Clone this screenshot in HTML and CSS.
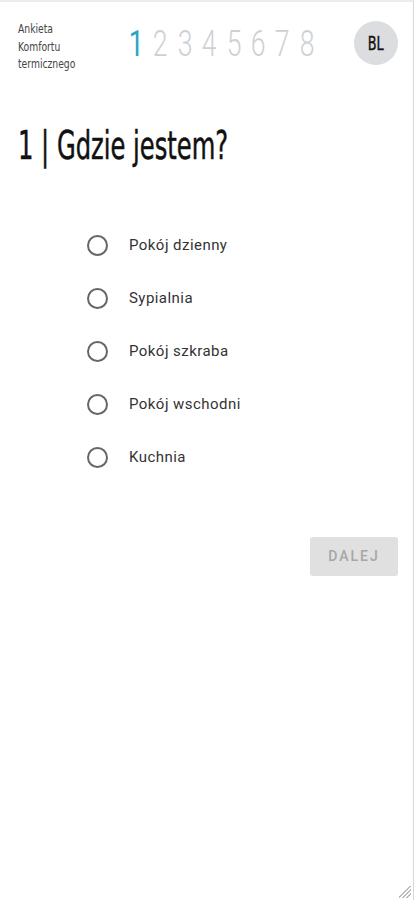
FILE: index.html
```html
<!DOCTYPE html>
<html lang="pl">
<head>
<meta charset="utf-8">
<title>Ankieta Komfortu termicznego</title>
<link rel="stylesheet" href="styles.css">
</head>
<body>
<div class="frame">
  <header class="top">
    <div class="brand"><span class="narrow">Ankieta<br>Komfortu<br>termicznego</span></div>
    <nav class="steps">
      <span class="step active">1</span>
      <span class="step">2</span>
      <span class="step">3</span>
      <span class="step">4</span>
      <span class="step">5</span>
      <span class="step">6</span>
      <span class="step">7</span>
      <span class="step">8</span>
    </nav>
    <div class="avatar"><span class="narrow">BL</span></div>
  </header>
  <h1 class="title"><span class="narrow">1 | Gdzie jestem?</span></h1>
  <form class="options">
    <label class="option"><input type="radio" name="room"><span class="dot"></span><span class="text">Pokój dzienny</span></label>
    <label class="option"><input type="radio" name="room"><span class="dot"></span><span class="text">Sypialnia</span></label>
    <label class="option"><input type="radio" name="room"><span class="dot"></span><span class="text">Pokój szkraba</span></label>
    <label class="option"><input type="radio" name="room"><span class="dot"></span><span class="text">Pokój wschodni</span></label>
    <label class="option"><input type="radio" name="room"><span class="dot"></span><span class="text">Kuchnia</span></label>
  </form>
  <div class="actions">
    <button class="next" type="button" disabled>DALEJ</button>
  </div>
  <div class="grip"></div>
</div>
</body>
</html>
```
FILE: styles.css
```css
html, body {
  margin: 0;
  padding: 0;
  background: #fff;
}
.frame {
  box-sizing: border-box;
  width: 414px;
  height: 900px;
  border-top: 2px solid #ececec;
  border-right: 1px solid #d9d9d9;
  position: relative;
}
.narrow {
  display: inline-block;
  font-family: "DejaVu Sans Condensed", "DejaVu Sans", sans-serif;
  transform-origin: left center;
}
.top {
  display: flex;
  align-items: center;
  padding: 18px 15px 0 18px;
}
.brand {
  width: 106px;
  font-size: 12.5px;
  line-height: 17.5px;
  color: #444;
}
.brand .narrow {
  transform: scaleX(0.82);
}
.steps {
  display: flex;
  margin-top: -6px;
}
.step {
  width: 24.4px;
  text-align: center;
  font-family: Roboto, "Liberation Sans", sans-serif;
  font-weight: 300;
  font-size: 37px;
  line-height: 40px;
  color: #cdd1d6;
  transform: scaleX(0.72);
}
.step.active {
  color: #2aa3c8;
  font-weight: 400;
}
.avatar {
  margin-left: auto;
  width: 44px;
  height: 44px;
  border-radius: 50%;
  background: #dcdde0;
  display: flex;
  align-items: center;
  justify-content: center;
  font-size: 19px;
  color: #111;
  margin-top: -8px;
}
.avatar .narrow {
  transform: scaleX(0.75);
  transform-origin: center;
  -webkit-text-stroke: 0.4px #111;
}
.title {
  margin: 50px 0 0 18px;
  font-weight: normal;
  font-size: 39px;
  line-height: 44px;
  color: #111;
}
.title .narrow {
  transform: scaleX(0.69);
  -webkit-text-stroke: 0.5px #111;
}
.options {
  display: flex;
  flex-direction: column;
  margin: 51px 0 0 87px;
}
.option {
  display: flex;
  align-items: center;
  height: 53px;
  font-family: Roboto, "Liberation Sans", sans-serif;
  font-size: 15px;
  letter-spacing: 0.45px;
  color: #333;
}
.option input {
  display: none;
}
.dot {
  box-sizing: border-box;
  width: 21px;
  height: 21px;
  border: 2px solid #666;
  border-radius: 50%;
  margin-right: 21px;
}
.actions {
  display: flex;
  justify-content: flex-end;
  padding-right: 15px;
  margin-top: 53px;
}
.next {
  width: 88px;
  height: 39px;
  border: none;
  border-radius: 3px;
  background: #e0e0e0;
  color: #a6a6a6;
  font-family: Roboto, "Liberation Sans", sans-serif;
  font-weight: 500;
  font-size: 14px;
  letter-spacing: 2px;
}
.grip {
  position: absolute;
  right: 2px;
  bottom: 2px;
  width: 12px;
  height: 12px;
  background: linear-gradient(135deg, transparent 0 45%, #bbb 45% 52%, transparent 52% 62%, #bbb 62% 69%, transparent 69% 79%, #bbb 79% 86%, transparent 86%);
}
```
